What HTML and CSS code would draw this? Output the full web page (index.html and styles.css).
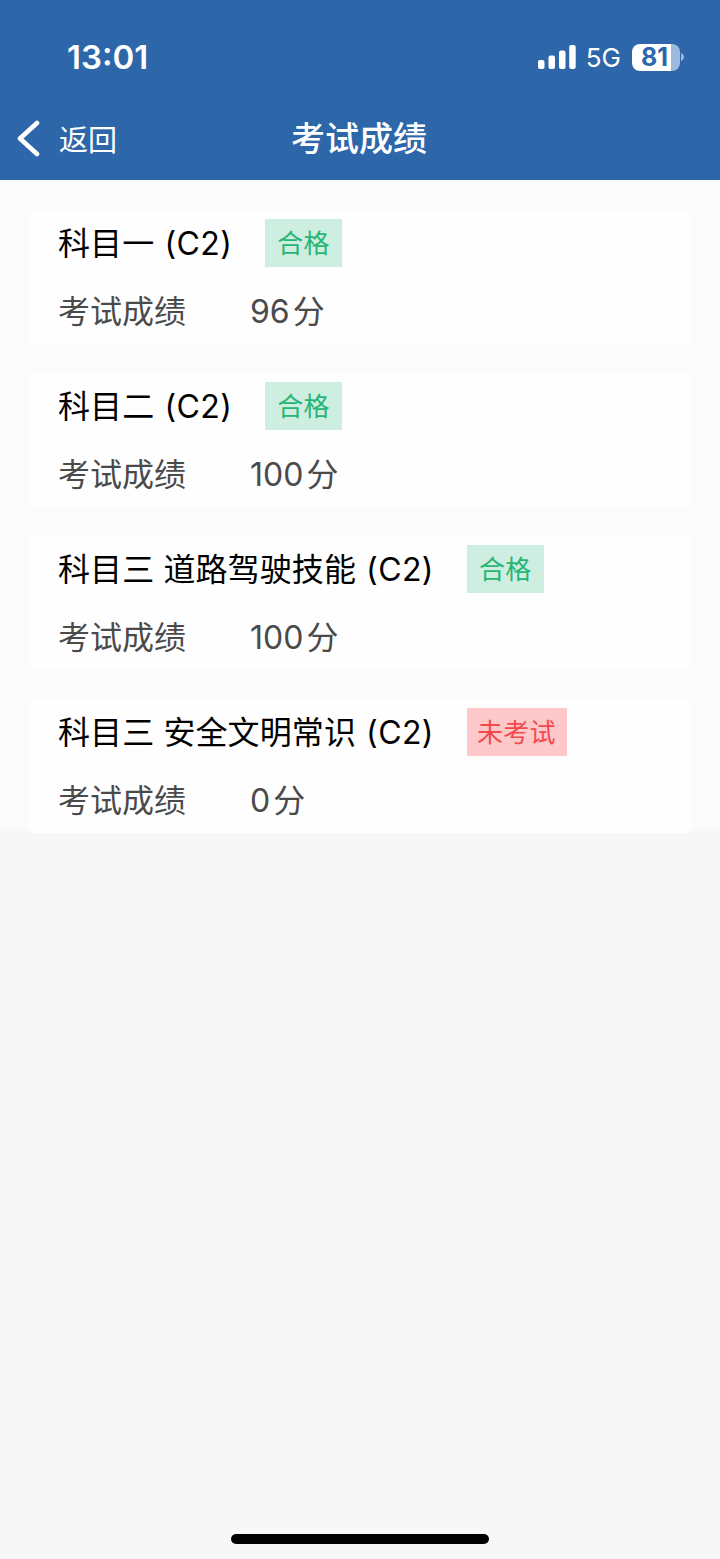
FILE: index.html
```
<!DOCTYPE html>
<html lang="zh-CN">
  <head>
    <meta charset="UTF-8" />
    <meta name="viewport" content="width=device-width, initial-scale=1.0" />
    <title>考试成绩</title>
    <link rel="stylesheet" href="styles.css">
  </head>
  <body>
    <header class="header">
      <div class="status-bar">
        <span class="time">13:01</span>
        <div class="status-icons">
          <svg class="signal" width="38" height="25" viewBox="0 0 38 25" fill="#fff">
            <rect x="0" y="15" width="6.500" height="9" rx="2" />
            <rect x="10.500" y="10.500" width="6.500" height="13.500" rx="2" />
            <rect x="21" y="5.500" width="6.500" height="18.500" rx="2" />
            <rect x="31.200" y="0" width="6.500" height="24" rx="2" />
          </svg>
          <span class="network">5G</span>
          <div class="battery">
            <span class="battery-level">81</span>
          </div>
          <svg class="battery-cap" width="3" height="8" viewBox="0 0 3 8">
            <path d="M0 0C4 2 4 6 0 8Z" fill="#9db9db" />
          </svg>
        </div>
      </div>
      <nav class="nav-bar">
        <a class="back" href="#">
          <svg width="24" height="38" viewBox="0 0 24 38">
            <path d="M21 3L4 18.500L21 34" fill="none" stroke="#fff" stroke-width="4.600" stroke-linecap="round" stroke-linejoin="round" />
          </svg>
          <span class="back-text">返回</span>
        </a>
        <h1 class="title">考试成绩</h1>
      </nav>
    </header>

    <main class="score-list">
      <section class="card">
        <div class="subject">
          <h2>科目一 <span class="level">(C2)</span></h2>
          <span class="tag pass">合格</span>
        </div>
        <div class="score">
          <span class="label">考试成绩</span>
          <span class="value">96<span class="unit">分</span></span>
        </div>
      </section>

      <section class="card">
        <div class="subject">
          <h2>科目二 <span class="level">(C2)</span></h2>
          <span class="tag pass">合格</span>
        </div>
        <div class="score">
          <span class="label">考试成绩</span>
          <span class="value">100<span class="unit">分</span></span>
        </div>
      </section>

      <section class="card">
        <div class="subject">
          <h2>科目三 道路驾驶技能 <span class="level">(C2)</span></h2>
          <span class="tag pass">合格</span>
        </div>
        <div class="score">
          <span class="label">考试成绩</span>
          <span class="value">100<span class="unit">分</span></span>
        </div>
      </section>

      <section class="card">
        <div class="subject">
          <h2>科目三 安全文明常识 <span class="level">(C2)</span></h2>
          <span class="tag pending">未考试</span>
        </div>
        <div class="score">
          <span class="label">考试成绩</span>
          <span class="value">0<span class="unit">分</span></span>
        </div>
      </section>
    </main>

    <div class="home-indicator"></div>
  </body>
</html>
```
FILE: styles.css
```
* {
  box-sizing: border-box;
}
body {
  margin: 0;
  min-height: 1559px;
  display: flex;
  flex-direction: column;
  background-color: #f7f7f7;
  font-family: Inter, "Noto Sans CJK SC", sans-serif;
}
h1,
h2 {
  margin: 0;
}
.header {
  height: 180px;
  background-color: #2d67aa;
  color: #fff;
}
.status-bar {
  height: 98px;
  padding: 16px 36px 0 67px;
  display: flex;
  align-items: center;
  justify-content: space-between;
}
.time {
  font-size: 33px;
  font-weight: 600;
  line-height: 40px;
}
.status-icons {
  display: flex;
  align-items: center;
}
.network {
  margin: 2px 11px 0 10px;
  font-size: 26px;
  line-height: 30px;
}
.battery {
  width: 48px;
  height: 27px;
  border-radius: 8px;
  background: linear-gradient(to right, #fff 39px, #9db9db 39px);
}
.battery-level {
  display: block;
  padding-left: 9px;
  color: #2d67aa;
  font-size: 25px;
  font-weight: 700;
  line-height: 27px;
}
.battery-cap {
  margin-left: 1px;
}
.nav-bar {
  height: 82px;
  display: grid;
  grid-template-columns: 1fr auto 1fr;
  align-items: center;
}
.back {
  display: flex;
  align-items: center;
  gap: 19px;
  padding-left: 16px;
  color: #fff;
  font-size: 29px;
  line-height: 40px;
  text-decoration: none;
}
.back-text {
  padding-top: 3px;
}
.title {
  padding-right: 2px;
  font-size: 34px;
  font-weight: 500;
  line-height: 48px;
}
.score-list {
  height: 649px;
  padding: 29.6px 28px 0;
  display: flex;
  flex-direction: column;
  gap: 29.2px;
  background-color: #fbfbfb;
}
.card {
  flex: none;
  height: 134px;
  padding: 9px 30px 0;
  border-radius: 8px;
  background-color: #fefefe;
}
.subject {
  height: 48px;
  display: flex;
  align-items: center;
  gap: 33px;
}
.subject h2 {
  padding-top: 2px;
  color: #000;
  font-size: 32px;
  font-weight: 400;
  line-height: 48px;
  letter-spacing: 0.1px;
}
.level {
  margin-left: 1px;
  letter-spacing: 0.4px;
}
.tag {
  height: 48px;
  padding: 0 12px;
  font-size: 26px;
  line-height: 49px;
  letter-spacing: 0.3px;
}
.pass {
  background-color: #cdeee1;
  color: #27b573;
}
.pending {
  padding: 0 11px 0 10px;
  background-color: #fcc8c9;
  color: #f4484d;
}
.score {
  margin-top: 20px;
  display: flex;
  color: #4a4a4a;
  font-size: 32px;
  line-height: 49px;
}
.label {
  width: 192px;
}
.unit {
  margin-left: 3px;
}
.home-indicator {
  width: 258px;
  height: 10px;
  margin: auto auto 15px;
  border-radius: 5px;
  background-color: #000;
}
```
